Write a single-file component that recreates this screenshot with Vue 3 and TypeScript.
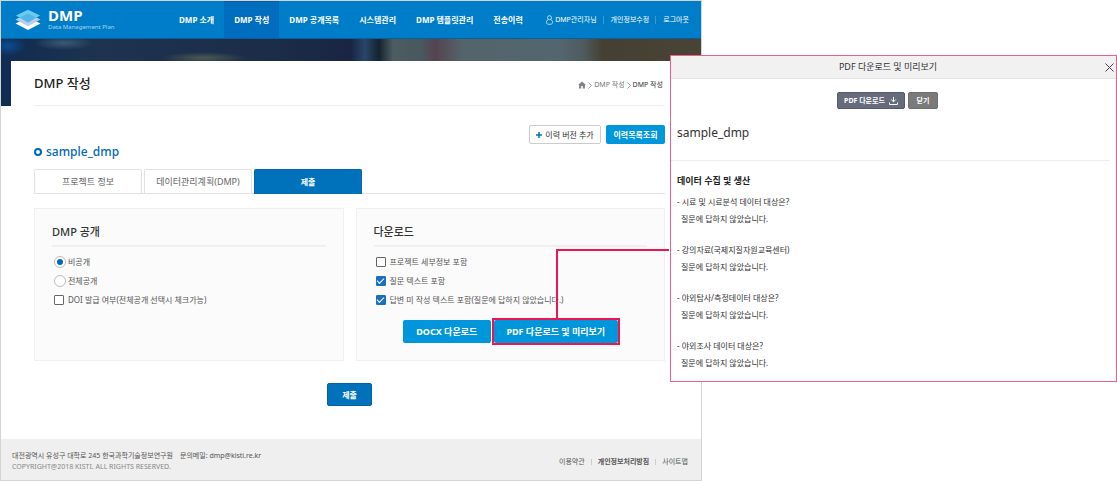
<script setup lang="ts">
import { ref } from 'vue'

interface NavItem {
  label: string
  active?: boolean
}

const navItems: NavItem[] = [
  { label: 'DMP 소개' },
  { label: 'DMP 작성', active: true },
  { label: 'DMP 공개목록' },
  { label: '시스템관리' },
  { label: 'DMP 템플릿관리' },
  { label: '전송이력' },
]

const tabs: NavItem[] = [
  { label: '프로젝트 정보' },
  { label: '데이터관리계획(DMP)' },
  { label: '제출', active: true },
]

const visibility = ref<'private' | 'public'>('private')
const issueDoi = ref(false)

const downloadOptions = ref([
  { label: '프로젝트 세부정보 포함', checked: false },
  { label: '질문 텍스트 포함', checked: true },
  { label: '답변 미 작성 텍스트 포함(질문에 답하지 않았습니다.)', checked: true },
])

const noAnswer = '질문에 답하지 않았습니다.'
const questions: string[] = [
  '시료 및 시료분석 데이터 대상은?',
  '강의자료(국제지질자원교육센터)',
  '야외탐사/측정데이터 대상은?',
  '야외조사 데이터 대상은?',
]
</script>

<template>
  <div class="layout">
    <div class="page">
      <header class="topbar">
        <a class="brand" href="#">
          <svg class="brand-mark" width="26" height="22" viewBox="0 0 26 22" aria-hidden="true">
            <path d="M0.5 14.5 L13 8.5 L25.5 14.5 L13 21 Z" fill="#ffffff" />
            <path d="M0.5 10.5 L13 4.5 L25.5 10.5 L13 17.2 Z" fill="#b5cdf0" />
            <path d="M1 6.5 L13 0.8 L25 6.5 L13 13.5 Z" fill="#6ccbf1" />
            <path d="M4.7 8.6 L13 4.5 L21.3 8.6 L13 13.5 Z" fill="#52b6e6" />
          </svg>
          <span class="brand-text">
            <strong>DMP</strong>
            <small>Data Management Plan</small>
          </span>
        </a>
        <nav class="main-nav">
          <a v-for="item in navItems" :key="item.label" href="#" :class="{ active: item.active }">{{ item.label }}</a>
        </nav>
        <div class="utility">
          <a href="#" class="user">
            <svg width="7" height="10" viewBox="0 0 7 10" fill="none" stroke="#b5dcf3" aria-hidden="true">
              <circle cx="3.5" cy="2.7" r="2" />
              <path d="M2.2 4.6 C0.2 5.4 0.4 7 0.5 8.2 C1.5 9.8 5.5 9.8 6.5 8.2 C6.6 7 6.8 5.4 4.8 4.6" />
            </svg>
            DMP관리자님
          </a>
          <a href="#">개인정보수정</a>
          <a href="#">로그아웃</a>
        </div>
      </header>

      <div class="backdrop">
        <main class="card">
          <div class="title-row">
            <h1>DMP 작성</h1>
            <div class="crumbs">
              <svg width="8" height="8" viewBox="0 0 9 8" aria-hidden="true">
                <path d="M4.5 0 L9 4 L7.8 4 L7.8 8 L5.4 8 L5.4 5.2 L3.6 5.2 L3.6 8 L1.2 8 L1.2 4 L0 4 Z" fill="#7f838b" />
              </svg>
              <svg class="sep" width="4" height="7" viewBox="0 0 4 7" aria-hidden="true"><path d="M0.5 0.5 L3.5 3.5 L0.5 6.5" /></svg>
              <a href="#">DMP 작성</a>
              <svg class="sep" width="4" height="7" viewBox="0 0 4 7" aria-hidden="true"><path d="M0.5 0.5 L3.5 3.5 L0.5 6.5" /></svg>
              <a href="#" class="current">DMP 작성</a>
            </div>
          </div>

          <div class="actions">
            <button type="button" class="btn outline">
              <svg width="6" height="6" viewBox="0 0 6 6" aria-hidden="true"><path d="M3 0 V6 M0 3 H6" stroke="#0072bc" stroke-width="1.5" /></svg>
              이력 버전 추가
            </button>
            <button type="button" class="btn sky">이력목록조회</button>
          </div>

          <h2 class="plan-name"><span class="ring"></span>sample_dmp</h2>

          <div class="tabs">
            <button v-for="tab in tabs" :key="tab.label" type="button" :class="{ active: tab.active }">{{ tab.label }}</button>
          </div>

          <div class="panels">
            <section class="panel">
              <h3>DMP 공개</h3>
              <div class="options">
                <label><input v-model="visibility" type="radio" name="visibility" value="private" />비공개</label>
                <label><input v-model="visibility" type="radio" name="visibility" value="public" />전체공개</label>
                <label><input v-model="issueDoi" type="checkbox" />DOI 발급 여부(전체공개 선택시 체크가능)</label>
              </div>
            </section>
            <section class="panel">
              <h3>다운로드</h3>
              <div class="options">
                <label v-for="option in downloadOptions" :key="option.label">
                  <input v-model="option.checked" type="checkbox" />{{ option.label }}
                </label>
              </div>
              <div class="downloads">
                <button type="button" class="download docx">DOCX 다운로드</button>
                <div class="callout">
                  <button type="button" class="download pdf">PDF 다운로드 및 미리보기</button>
                  <span class="callout-box"></span>
                  <span class="callout-line"></span>
                </div>
              </div>
            </section>
          </div>

          <button type="button" class="submit">제출</button>
        </main>
      </div>

      <footer class="footer">
        <div>
          <p class="address"><span>대전광역시 유성구 대학로 245 한국과학기술정보연구원</span><span>문의메일: dmp@kisti.re.kr</span></p>
          <p class="copyright">COPYRIGHT@2018 KISTI. ALL RIGHTS RESERVED.</p>
        </div>
        <div class="footer-links">
          <a href="#">이용약관</a>
          <a href="#" class="strong">개인정보처리방침</a>
          <a href="#">사이트맵</a>
        </div>
      </footer>
    </div>

    <section class="popup" role="dialog" aria-labelledby="popup-title">
      <header class="popup-head">
        <h2 id="popup-title">PDF 다운로드 및 미리보기</h2>
        <button type="button" aria-label="닫기">
          <svg width="9" height="9" viewBox="0 0 9 9" aria-hidden="true"><path d="M0.5 0.5 L8.5 8.5 M8.5 0.5 L0.5 8.5" stroke="#444" fill="none" /></svg>
        </button>
      </header>
      <div class="popup-actions">
        <button type="button" class="slate">
          PDF 다운로드
          <svg width="9" height="8" viewBox="0 0 9 8" fill="none" stroke="#fff" aria-hidden="true">
            <path d="M4.5 0 V4.5 M2.2 2.5 L4.5 4.8 L6.8 2.5 M0.5 5.5 V7.5 H8.5 V5.5" />
          </svg>
        </button>
        <button type="button" class="gray">닫기</button>
      </div>
      <h3 class="popup-name">sample_dmp</h3>
      <div class="popup-body">
        <h4>데이터 수집 및 생산</h4>
        <dl>
          <div v-for="question in questions" :key="question">
            <dt>- {{ question }}</dt>
            <dd>{{ noAnswer }}</dd>
          </div>
        </dl>
      </div>
    </section>
  </div>
</template>

<style>
body {
  margin: 0;
  background: #fff;
}
</style>

<style scoped>
.layout,
.layout * {
  box-sizing: border-box;
}

.layout {
  display: grid;
  grid-template-columns: 670fr 32px 415fr;
  min-height: 100vh;
  font-family: 'Noto Sans', 'Noto Sans CJK KR', sans-serif;
  font-size: 8px;
  line-height: 12px;
  color: #444;
  white-space: nowrap;
}

h1, h2, h3, h4, p, dl, dd {
  margin: 0;
}

a {
  color: inherit;
  text-decoration: none;
}

button {
  padding: 0;
  border: 0;
  font: inherit;
  color: inherit;
  cursor: pointer;
}

svg {
  flex: none;
}

.page {
  grid-column: 1 / 3;
  grid-row: 1;
  display: flex;
  flex-direction: column;
  border: 1px solid #d4d4d4;
}

/* Top bar */
.topbar {
  display: flex;
  height: 38px;
  background: #007dc9;
  border-bottom: 1px solid #0a5f9b;
  color: #fff;
}

.brand {
  display: flex;
  align-items: center;
  gap: 7px;
  width: 168px;
  padding-left: 14px;
}

.brand-text {
  display: flex;
  flex-direction: column;
}

.brand-text strong {
  font-size: 15px;
  line-height: 15px;
}

.brand-text small {
  font-size: 6px;
  line-height: 9px;
  color: #a5d4f1;
}

.main-nav {
  display: flex;
  font-weight: 700;
}

.main-nav a {
  display: flex;
  align-items: center;
  padding: 0 10px;
}

.main-nav a.active {
  background: #006dbe;
  border-top: 1px solid #0a5c9d;
}

.utility {
  display: flex;
  align-items: center;
  margin-left: auto;
  padding-right: 12px;
  font-size: 7px;
  line-height: 8px;
}

.utility a + a {
  margin-left: 6px;
  padding-left: 7px;
  border-left: 1px solid #3b9ad4;
}

.user {
  display: flex;
  align-items: center;
  gap: 2px;
}

/* Blurred banner behind the content card */
.backdrop {
  background:
    radial-gradient(ellipse 30px 7px at 9% 4px, #3b5a75, transparent) 0 0 / 100% 67px no-repeat,
    radial-gradient(ellipse 18px 10px at 1% 7px, #0c4c94, transparent) 0 0 / 100% 67px no-repeat,
    radial-gradient(ellipse 42px 6px at 29% 19px, #4d5a50, transparent) 0 0 / 100% 67px no-repeat,
    linear-gradient(90deg, #102c52 0, #1d3350 14%, #1b2c48 40%, #192543 50%, #29466a 52%, #14232f 54%, #4c5c60 56%, #48595f 60%, #56434f 62%, #53646b 66%, #53656e 80%, #4f5c60 83%, #463f33 86%, #494436 100%) 0 0 / 100% 67px no-repeat;
}

.card {
  display: flex;
  flex-direction: column;
  margin: 22px 0 0 10px;
  padding: 0 36px 24px 23px;
  background: #fff;
}

.title-row {
  display: flex;
  align-items: center;
  justify-content: space-between;
  height: 45px;
  border-bottom: 1px solid #eee;
}

.title-row h1 {
  font-size: 13px;
  line-height: 18px;
  font-weight: 500;
  color: #222;
}

.crumbs {
  display: flex;
  align-items: center;
  gap: 2px;
  padding: 4px 2px 0 0;
  font-size: 7px;
  color: #777;
}

.crumbs .current {
  color: #333;
}

.sep {
  fill: none;
  stroke: #999;
}

.actions {
  display: flex;
  justify-content: flex-end;
  gap: 5px;
  margin-top: 19px;
}

.btn {
  display: flex;
  align-items: center;
  justify-content: center;
  gap: 3px;
  height: 19px;
  border-radius: 2px;
}

.btn.outline {
  width: 72px;
  border: 1px solid #ccc;
  background: #fff;
  color: #333;
}

.btn.sky {
  width: 59px;
  background: #0096db;
  color: #fff;
  font-weight: 700;
}

.plan-name {
  display: flex;
  align-items: center;
  gap: 4px;
  margin-bottom: 9px;
  font-size: 12px;
  line-height: 16px;
  font-weight: 500;
  color: #0068b7;
}

.ring {
  width: 8px;
  height: 8px;
  border: 2px solid #0068b7;
  border-radius: 50%;
}

.tabs {
  display: flex;
  gap: 2px;
  border-bottom: 1px solid #e2e2e2;
}

.tabs button {
  width: 108px;
  height: 24px;
  border: 1px solid #e2e2e2;
  border-bottom: 0;
  border-radius: 2px 2px 0 0;
  background: #fff;
  font-size: 9px;
  color: #666;
}

.tabs button.active {
  height: 25px;
  margin-bottom: -1px;
  border-color: #0068b0;
  background: #0072bc;
  color: #fff;
  font-size: 8px;
  font-weight: 700;
}

.panels {
  display: grid;
  grid-template-columns: 1fr 1fr;
  gap: 12px;
  margin-top: 14px;
}

.panel {
  padding: 15px 17px 17px;
  border: 1px solid #f0f0f0;
  background: #fbfbfb;
}

.panel h3 {
  padding-bottom: 5px;
  border-bottom: 2px solid #f0f0f0;
  font-size: 11px;
  line-height: 16px;
  font-weight: 500;
  color: #333;
}

.options {
  display: flex;
  flex-direction: column;
  gap: 7px;
  padding: 9px 0 0 2px;
  color: #555;
}

.options label {
  display: flex;
  align-items: center;
  gap: 3px;
}

.options input {
  flex: none;
  display: grid;
  place-content: center;
  width: 10px;
  height: 10px;
  margin: 0 1px 0 0;
  appearance: none;
  border: 1px solid #666;
  border-radius: 1px;
  background: #fff;
}

.options input[type='radio'] {
  width: 12px;
  height: 12px;
  margin: 0 -1px 0 0;
  border-color: #bbb;
  border-radius: 50%;
}

.options input[type='radio']:checked::before {
  content: '';
  width: 6px;
  height: 6px;
  border-radius: 50%;
  background: #0068b7;
}

.options input[type='checkbox']:checked {
  border-color: #1b6ec2;
  background: #1b6ec2;
}

.options input[type='checkbox']:checked::before {
  content: '';
  width: 6px;
  height: 3px;
  margin-bottom: 2px;
  border: solid #fff;
  border-width: 0 0 1px 1px;
  transform: rotate(-45deg);
}

.downloads {
  display: flex;
  justify-content: center;
  gap: 3px;
  margin-top: 14px;
}

.download {
  height: 23px;
  border-radius: 2px;
  background: #0096db;
  color: #fff;
  font-size: 9px;
  font-weight: 700;
}

.docx {
  width: 88px;
}

.pdf {
  width: 124px;
}

.callout {
  position: relative;
}

.callout-box {
  position: absolute;
  inset: -2px;
  border: 2px solid #f0144f;
  pointer-events: none;
}

.callout-line {
  position: absolute;
  left: 62px;
  bottom: 25px;
  width: 113px;
  height: 69px;
  border: solid #f0144f;
  border-width: 2px 0 0 2px;
  pointer-events: none;
}

.submit {
  align-self: center;
  width: 45px;
  height: 23px;
  margin-top: 22px;
  border: 1px solid #0062a8;
  border-radius: 2px;
  background: #0072bc;
  color: #fff;
  font-weight: 700;
}

/* Footer */
.footer {
  display: flex;
  align-items: center;
  justify-content: space-between;
  height: 41px;
  margin-top: auto;
  padding: 2px 13px 0 11px;
  background: #efefef;
  font-size: 7px;
  line-height: 11px;
  color: #555;
}

.address {
  display: flex;
  gap: 7px;
}

.copyright {
  color: #888;
}

.footer-links {
  display: flex;
  line-height: 6px;
  padding-top: 3px;
}

.footer-links a + a {
  margin-left: 6px;
  padding-left: 6px;
  border-left: 1px solid #ccc;
}

.footer-links .strong {
  font-weight: 700;
}

/* Preview popup */
.popup {
  grid-column: 2 / 4;
  grid-row: 1;
  align-self: start;
  margin-top: 55px;
  padding-bottom: 10px;
  border: 1px solid #ee5f88;
  background: #fff;
  color: #333;
}

.popup-head {
  display: flex;
  align-items: center;
  height: 23px;
  padding-right: 2px;
  border-bottom: 1px solid #e4e4e4;
  background: #f1f1f1;
}

.popup-head h2 {
  flex: 1;
  font-size: 9px;
  line-height: 12px;
  font-weight: 400;
  text-align: center;
}

.popup-head button {
  display: flex;
  background: none;
}

.popup-actions {
  display: flex;
  justify-content: center;
  gap: 3px;
  padding: 13px 12px 0 0;
}

.popup-actions button {
  display: flex;
  align-items: center;
  justify-content: center;
  gap: 4px;
  height: 17px;
  border-radius: 2px;
  color: #fff;
  font-size: 7px;
  font-weight: 700;
}

.popup-actions .slate {
  width: 68px;
  border: 1px solid #555b6a;
  background: #666c7b;
}

.popup-actions .gray {
  width: 30px;
  border: 1px solid #6f6f6f;
  background: #7a7a7a;
}

.popup-name {
  margin-right: 6px;
  padding: 16px 6px 19px;
  border-bottom: 1px solid #eee;
  font-size: 12px;
  line-height: 16px;
  font-weight: 400;
}

.popup-body {
  padding: 13px 6px 0;
}

.popup-body h4 {
  margin-bottom: 5px;
  font-size: 9px;
  line-height: 14px;
  font-weight: 700;
  color: #222;
}

.popup-body dl {
  display: flex;
  flex-direction: column;
  gap: 14px;
  line-height: 17px;
}

.popup-body dd {
  padding-left: 4px;
}
</style>
